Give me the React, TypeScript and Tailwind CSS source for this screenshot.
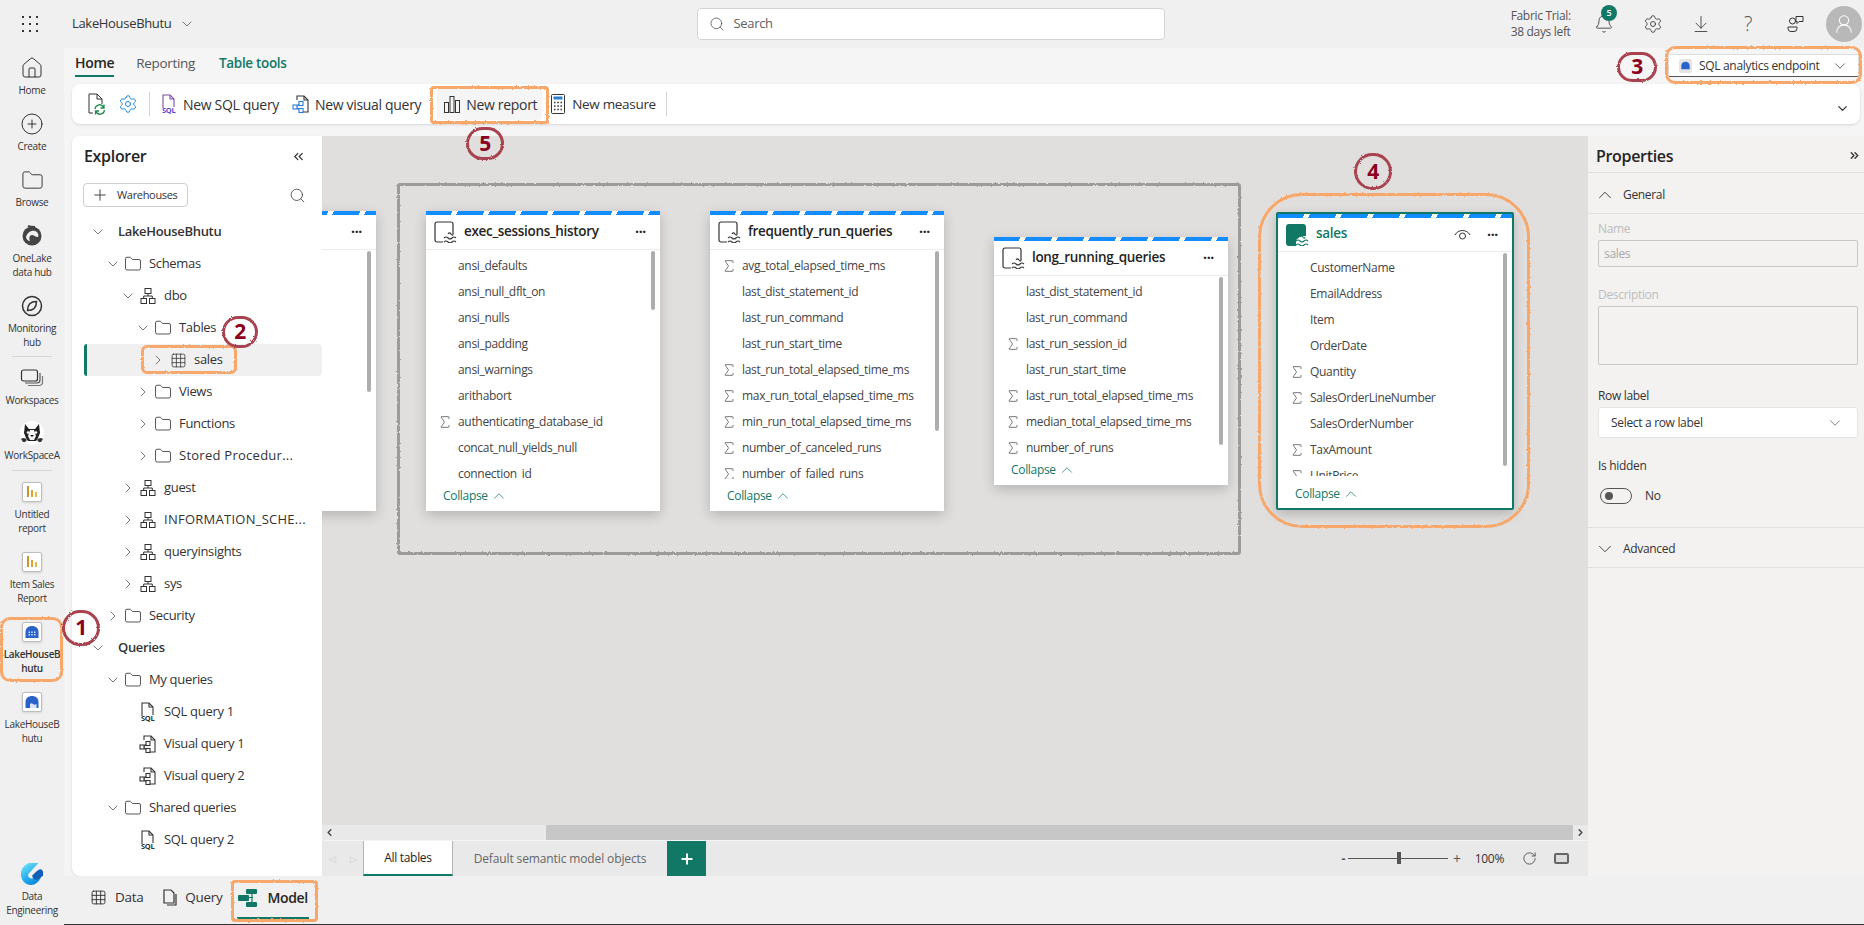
import {
  ArrowDownToLine,
  Bell,
  ChevronDown,
  ChevronRight,
  ChevronUp,
  ChevronsLeft,
  ChevronsRight,
  CirclePlus,
  Folder,
  Grid3x3,
  Home,
  Plus,
  RotateCw,
  Search,
  Settings,
  Sigma,
  UserRound,
} from "lucide-react";
import type { ReactNode } from "react";

function Waffle() {
  const dots = [0, 1, 2, 3, 4, 5, 6, 7, 8];
  return (
    <div className="grid w-4 grid-cols-3 gap-[5px]">
      {dots.map((d) => (
        <span key={d} className="h-[2px] w-[2px] bg-[#333]" />
      ))}
    </div>
  );
}

function ReportTile() {
  return (
    <span className="flex h-5 w-5 items-end justify-center gap-[2px] rounded-[2px] border border-[#bdbdbd] bg-white pb-[4px] shadow-sm">
      <span className="h-[11px] w-[2px] bg-[#c9962b]" />
      <span className="h-[7px] w-[2px] bg-[#e0a030]" />
      <span className="h-[5px] w-[2px] bg-[#e8b84a]" />
    </span>
  );
}

function LakeTile({ alt }: { alt?: boolean }) {
  return (
    <span className="flex h-5 w-5 items-center justify-center rounded-[2px] border border-[#bdbdbd] bg-white shadow-sm">
      <svg width="14" height="14" viewBox="0 0 14 14">
        <path d="M0.5 7C0.5 3 3.500 1 7 1s6.500 2 6.500 6v6H0.500z" fill="#2a62c9" />
        {alt ? (
          <path d="M5 9c1-1 2-1 3 0s2 1 3.500 0V13H5z" fill="#d7e6fb" />
        ) : (
          <path d="M3.500 6.500H5V8H3.500zm2.700 0h1.500V8H6.200zm2.800 0h1.500V8H9zM3.500 9H5v1.500H3.500zm2.700 0h1.500v1.500H6.200zm2.800 0h1.500v1.500H9z" fill="#cfe0fa" />
        )}
      </svg>
    </span>
  );
}

function OneLakeIcon() {
  return (
    <svg width="24" height="24" viewBox="0 0 24 24" fill="none">
      <circle cx="12" cy="12" r="9.500" fill="#444" />
      <path d="M6 13c1-4 5-7 9-6 3 1 4 4 3 6-3 0-4-2-6-2-3 0-3 4-2 6-2 0-4-2-4-4z" fill="#f0f0f0" />
      <path d="M8 2c2 1 5 1 7 1" stroke="#444" strokeWidth="2" />
    </svg>
  );
}

function MonitorIcon() {
  return (
    <svg width="24" height="24" viewBox="0 0 24 24" fill="none" stroke="#333" strokeWidth="1.500">
      <circle cx="12" cy="12" r="9.500" />
      <path d="M7.500 16.500c0-6 3.500-9 9-9 0 6-3.500 9-9 9z" />
    </svg>
  );
}

function WorkspacesIcon() {
  return (
    <svg width="24" height="24" viewBox="0 0 24 24" fill="none" stroke="#333" strokeWidth="1.200">
      <rect x="1.500" y="4" width="16" height="11" rx="2" />
      <path d="M20 7v7a3 3 0 0 1-3 3H5" stroke="#555" />
      <path d="M22.500 10v6a3.500 3.500 0 0 1-3.500 3.500H8" stroke="#777" />
    </svg>
  );
}

function DogAvatar() {
  return (
    <svg width="24" height="24" viewBox="0 0 24 24">
      <circle cx="12" cy="12" r="12" fill="#fff" />
      <path d="M5 3l4 5h6l4-5 1 9-2 5-2 3H8l-2-3-2-5z" fill="#222" />
      <path d="M10 9h4l2 6-2 4h-4l-2-4z" fill="#f6f6f6" />
      <circle cx="8" cy="11.500" r="1.300" fill="#fff" />
      <circle cx="16" cy="11.500" r="1.300" fill="#fff" />
      <path d="M10 14h4l-2 2z" fill="#111" />
      <path d="M1 18c2-2 5-1 6 1l-2 2H3zM23 18c-2-2-5-1-6 1l2 2h2z" fill="#333" />
    </svg>
  );
}

function EngineeringLogo() {
  return (
    <svg width="26" height="26" viewBox="0 0 26 26">
      <defs>
        <linearGradient id="eng" x1="0.200" y1="0" x2="0.800" y2="1">
          <stop offset="0" stopColor="#6fe0fa" />
          <stop offset="0.600" stopColor="#1ea7e8" />
          <stop offset="1" stopColor="#0c7fd6" />
        </linearGradient>
      </defs>
      <path d="M10 1h10L9 13c-1 4 3 6 6 4l8-4c1 5-5 12-11 12C5 25 1 19 1 13 1 7 5 3 10 1z" fill="url(#eng)" />
      <path d="M13 15c2-2 5-6 8-7 2-1 4 1 4 3v4l-6 4c-3 1-5-1-6-4z" fill="#0f5fb8" />
    </svg>
  );
}

function SqlDoc({ tiny }: { tiny?: boolean }) {
  const c = tiny ? "#333" : "#7a4fa0";
  return (
    <svg width="20" height="22" viewBox="0 0 20 22" fill="none">
      <path d="M4 15V2h7l4 4v8" stroke={c} strokeWidth="1.100" />
      <path d="M11 2v4h4" stroke={c} strokeWidth="1.100" />
      <text x="3" y="20" fontSize="7.500" fontWeight="700" fill={tiny ? "#333" : "#5b4bd0"} fontFamily="Open Sans, sans-serif">
        SQL
      </text>
    </svg>
  );
}

function VisualDoc({ color }: { color: string }) {
  return (
    <svg width="20" height="20" viewBox="0 0 20 20" fill="none" stroke={color} strokeWidth="1.100">
      <path d="M6 6V2h7l4 4v12h-5" stroke="#333" />
      <path d="M13 2v4h4" stroke="#333" />
      <path d="M5 13l4-3.500M5 13l4 3.500" />
      <rect x="2" y="11" width="4" height="4" fill="#fff" />
      <rect x="8" y="7.500" width="4" height="4" fill="#fff" />
      <rect x="8" y="14.500" width="4" height="4" fill="#fff" />
    </svg>
  );
}

function RefreshDoc() {
  return (
    <svg width="20" height="24" viewBox="0 0 20 24" fill="none">
      <path d="M6 21H2V2h8l5 5v5" stroke="#333" />
      <path d="M10 2v5h5" stroke="#333" />
      <path d="M8 17a4.500 4.500 0 0 1 8-2.500l1 1.500M17.500 18a4.500 4.500 0 0 1-8 2.500l-1-1.500M17 12.500V16h-3.500M8.500 22.500V19H12" stroke="#1f8a4c" strokeWidth="1.300" />
    </svg>
  );
}

function ReportBars() {
  return (
    <svg width="20" height="20" viewBox="0 0 20 20" fill="none" stroke="#333" strokeWidth="1">
      <rect x="2.500" y="8.500" width="4" height="10" />
      <rect x="8" y="2.500" width="4" height="16" />
      <rect x="13.500" y="6.500" width="4" height="12" />
    </svg>
  );
}

function Calculator() {
  return (
    <svg width="20" height="22" viewBox="0 0 20 22" fill="none">
      <rect x="3.500" y="1.500" width="13" height="19" rx="1" stroke="#333" />
      <rect x="5.500" y="3.500" width="9" height="3" fill="#2b7cd3" />
      <path d="M6 9.500h1.500M9.300 9.500h1.500M12.500 9.500H14M6 13h1.500M9.300 13h1.500M12.500 13H14M6 16.500h1.500M9.300 16.500h1.500M12.500 16.500H14" stroke="#333" strokeWidth="1.500" />
    </svg>
  );
}

function SchemaIcon() {
  return (
    <svg width="18" height="18" viewBox="0 0 18 18" fill="none" stroke="#333" strokeWidth="1">
      <rect x="6" y="1.500" width="6" height="5" />
      <rect x="2" y="11.500" width="5.500" height="5" />
      <rect x="10.500" y="11.500" width="5.500" height="5" />
      <path d="M9 6.500V9M4.700 11.500V9h8.600v2.500" />
    </svg>
  );
}

function TableWave({ active }: { active?: boolean }) {
  return (
    <svg width="24" height="22" viewBox="0 0 24 22" fill="none">
      {active ? (
        <path d="M3 0h14a3 3 0 0 1 3 3v9h-5l-5 4v6H3a3 3 0 0 1-3-3V3a3 3 0 0 1 3-3z" fill="#117865" />
      ) : (
        <path d="M9 21H3a2 2 0 0 1-2-2V3a2 2 0 0 1 2-2h14a2 2 0 0 1 2 2v10" stroke="#333" strokeWidth="1.200" />
      )}
      <path d="M10 17c1.500-1.500 2.500-1.500 4 0s2.500 1.500 4 0 2.500-1.500 4 0M10 21c1.500-1.500 2.500-1.500 4 0s2.500 1.500 4 0 2.500-1.500 4 0M14 13c1-1.500 2-1.500 3 0s2 1.500 2 0" stroke={active ? "#117865" : "#333"} strokeWidth="1.100" />
    </svg>
  );
}

function ModelIcon() {
  return (
    <svg width="20" height="20" viewBox="0 0 20 20">
      <rect x="8" y="1" width="11" height="5" rx="1" fill="#117865" />
      <rect x="0" y="7" width="11" height="6" rx="1" fill="#117865" />
      <rect x="8" y="14" width="11" height="5" rx="1" fill="#117865" />
      <path d="M11 9.500h4M14 6v8" stroke="#117865" strokeWidth="1.200" />
    </svg>
  );
}

function RailItem({ icon, lines, tall, bold }: { icon: ReactNode; lines: string[]; tall?: string; bold?: boolean }) {
  return (
    <div className={`flex w-16 flex-col items-center ${tall ?? "h-[56px]"}`}>
      <span className="flex h-6 w-6 items-center justify-center">{icon}</span>
      <div className={`mt-[3px] text-center text-[10px] leading-[14px] text-[#333] ${bold ? "font-semibold" : ""}`}>
        {lines.map((l) => (
          <div key={l}>{l}</div>
        ))}
      </div>
    </div>
  );
}

function LeftRail() {
  return (
    <div className="flex h-full w-16 shrink-0 flex-col bg-[#f0f0f0] pt-2">
      <RailItem icon={<Home size={24} strokeWidth={1} color="#333" />} lines={["Home"]} />
      <RailItem icon={<CirclePlus size={24} strokeWidth={1} color="#333" />} lines={["Create"]} />
      <RailItem icon={<Folder size={23} strokeWidth={1} color="#333" />} lines={["Browse"]} />
      <RailItem icon={<OneLakeIcon />} lines={["OneLake", "data hub"]} tall="h-[70px]" />
      <RailItem icon={<MonitorIcon />} lines={["Monitoring", "hub"]} tall="h-[62px]" />
      <div className="mx-3 h-px bg-[#d6d6d6]" />
      <div className="mt-[9px]">
        <RailItem icon={<WorkspacesIcon />} lines={["Workspaces"]} tall="h-[55px]" />
        <RailItem icon={<DogAvatar />} lines={["WorkSpaceA"]} tall="h-[49px]" />
      </div>
      <div className="mx-3 h-px bg-[#d6d6d6]" />
      <div className="mt-[9px]">
        <RailItem icon={<ReportTile />} lines={["Untitled", "report"]} tall="h-[70px]" />
        <RailItem icon={<ReportTile />} lines={["Item Sales", "Report"]} tall="h-[70px]" />
        <RailItem icon={<LakeTile />} lines={["LakeHouseB", "hutu"]} tall="h-[70px]" bold />
        <RailItem icon={<LakeTile alt />} lines={["LakeHouseB", "hutu"]} tall="h-[70px]" />
      </div>
      <div className="mt-auto">
        <RailItem icon={<EngineeringLogo />} lines={["Data", "Engineering"]} tall="h-[63px]" />
      </div>
    </div>
  );
}

type Node = {
  level: number;
  label: string;
  chev?: "down" | "right";
  icon?: "folder" | "schema" | "table" | "sql" | "visual";
  bold?: boolean;
  selected?: boolean;
  wide?: boolean;
};

const treeNodes: Node[] = [
  { level: 0, label: "LakeHouseBhutu", chev: "down", bold: true },
  { level: 1, label: "Schemas", chev: "down", icon: "folder" },
  { level: 2, label: "dbo", chev: "down", icon: "schema" },
  { level: 3, label: "Tables", chev: "down", icon: "folder" },
  { level: 4, label: "sales", chev: "right", icon: "table", selected: true },
  { level: 3, label: "Views", chev: "right", icon: "folder" },
  { level: 3, label: "Functions", chev: "right", icon: "folder" },
  { level: 3, label: "Stored Procedur...", chev: "right", icon: "folder", wide: true },
  { level: 2, label: "guest", chev: "right", icon: "schema" },
  { level: 2, label: "INFORMATION_SCHE...", chev: "right", icon: "schema", wide: true },
  { level: 2, label: "queryinsights", chev: "right", icon: "schema" },
  { level: 2, label: "sys", chev: "right", icon: "schema" },
  { level: 1, label: "Security", chev: "right", icon: "folder" },
  { level: 0, label: "Queries", chev: "down", bold: true },
  { level: 1, label: "My queries", chev: "down", icon: "folder" },
  { level: 2, label: "SQL query 1", icon: "sql" },
  { level: 2, label: "Visual query 1", icon: "visual" },
  { level: 2, label: "Visual query 2", icon: "visual" },
  { level: 1, label: "Shared queries", chev: "down", icon: "folder" },
  { level: 2, label: "SQL query 2", icon: "sql" },
];

const indent = ["pl-[20px]", "pl-[35px]", "pl-[50px]", "pl-[65px]", "pl-[68px] ml-3"];

function TreeIcon({ kind }: { kind: Node["icon"] }) {
  if (kind === "folder") return <Folder size={18} strokeWidth={1.100} color="#333" />;
  if (kind === "schema") return <SchemaIcon />;
  if (kind === "table") return <Grid3x3 size={17} strokeWidth={1.100} color="#333" />;
  if (kind === "sql") return <SqlDoc tiny />;
  return <VisualDoc color="#333" />;
}

function TreeRow({ node }: { node: Node }) {
  const { level, label, chev, icon, bold, selected, wide } = node;
  return (
    <div className={`relative flex h-8 items-center text-[13px] text-[#333] ${indent[level]} ${selected ? "rounded bg-[#f0f0f0]" : ""} ${bold ? "font-semibold" : ""}`}>
      {selected && <span className="absolute left-0 top-0 h-full w-[3px] rounded-l bg-[#117865]" />}
      <span className="flex w-3 shrink-0 items-center justify-center">
        {chev === "down" && <ChevronDown size={16} strokeWidth={1} color="#333" className="shrink-0" />}
        {chev === "right" && <ChevronRight size={16} strokeWidth={1} color="#333" className="shrink-0" />}
      </span>
      {icon ? (
        <>
          <span className="ml-1 flex w-5 shrink-0 items-center justify-center">
            <TreeIcon kind={icon} />
          </span>
          <span className={`ml-[6px] whitespace-nowrap ${wide ? "tracking-[0.02em]" : ""}`}>{label}</span>
        </>
      ) : (
        <span className="ml-[14px] whitespace-nowrap">{label}</span>
      )}
    </div>
  );
}

function Explorer() {
  return (
    <div className="ml-2 flex h-full w-[250px] shrink-0 flex-col rounded-l-lg bg-white shadow">
      <div className="flex h-10 shrink-0 items-center justify-between pl-3 pr-4">
        <span className="text-[16px] font-semibold text-[#252423]">Explorer</span>
        <ChevronsLeft size={15} strokeWidth={2} color="#333" />
      </div>
      <div className="mt-[7px] flex h-6 items-center justify-between pl-[11px] pr-[16px]">
        <button className="flex h-6 w-[105px] items-center gap-2 rounded border border-[#cfcfcf] pl-[7px] text-[11px] text-[#333]">
          <Plus size={18} strokeWidth={1.200} color="#333" />
          Warehouses
        </button>
        <Search size={17} strokeWidth={1.100} color="#333" />
      </div>
      <div className="mt-[9px]">
        {treeNodes.map((n) => (
          <TreeRow key={n.label + n.level} node={n} />
        ))}
      </div>
    </div>
  );
}

type Column = { name: string; sum?: boolean };

const names = (list: string[]): Column[] =>
  list.map((s) => (s.startsWith("*") ? { name: s.slice(1), sum: true } : { name: s }));

function TableCard({
  title,
  columns,
  pos,
  thumb,
  listH,
  active,
}: {
  title: string;
  columns: Column[];
  pos: string;
  thumb: string;
  listH: string;
  active?: boolean;
}) {
  return (
    <div className={`absolute bg-white shadow-[0_4px_12px_rgba(0,0,0,0.2)] ${pos} ${active ? "rounded-[2px] border-2 border-[#117865]" : ""}`}>
      <div className="h-[4px] bg-[repeating-linear-gradient(115deg,#118dff_0,#118dff_24px,transparent_24px,transparent_29px)]" />
      <div className={`flex items-center border-b border-[#ececec] pl-[8px] pr-[14px] ${active ? "h-[34px]" : "h-[35px]"}`}>
        <TableWave active={active} />
        <span className={`mb-[2px] ml-[6px] text-[13.500px] font-semibold ${active ? "text-[#117865]" : "text-[#252423]"}`}>{title}</span>
        {active && (
          <svg className="ml-auto mr-[16px]" width="17" height="14" viewBox="0 0 17 14" fill="none" stroke="#333">
            <path d="M1 7c3-6 12-6 15 0" />
            <circle cx="8.500" cy="8" r="3" />
          </svg>
        )}
        <span className={`text-[14px] font-bold leading-none text-[#252423] ${active ? "" : "ml-auto"}`}>···</span>
      </div>
      <div className={`relative overflow-hidden pt-[3px] ${listH}`}>
        {columns.map((c) => (
          <div key={c.name} className="flex h-[26px] items-center text-[12px] text-[#444]">
            <span className="flex w-[32px] shrink-0 justify-end pr-[5px]">
              {c.sum && <Sigma size={16} strokeWidth={1} color="#333" />}
            </span>
            <span className="whitespace-nowrap">{c.name}</span>
          </div>
        ))}
        <span className={`absolute right-[5px] top-px w-1 rounded bg-[#adadad] ${thumb}`} />
      </div>
      <div className={`flex h-[31px] items-center gap-[2px] pl-[17px] text-[12px] text-[#117865] ${active ? "pt-[3px]" : ""}`}>
        Collapse
        <ChevronUp size={18} strokeWidth={1} color="#117865" />
      </div>
    </div>
  );
}

const execCols = names([
  "ansi_defaults",
  "ansi_null_dflt_on",
  "ansi_nulls",
  "ansi_padding",
  "ansi_warnings",
  "arithabort",
  "*authenticating_database_id",
  "concat_null_yields_null",
  "connection_id",
]);
const freqCols = names([
  "*avg_total_elapsed_time_ms",
  "last_dist_statement_id",
  "last_run_command",
  "last_run_start_time",
  "*last_run_total_elapsed_time_ms",
  "*max_run_total_elapsed_time_ms",
  "*min_run_total_elapsed_time_ms",
  "*number_of_canceled_runs",
  "*number_of_failed_runs",
]);
const longCols = names([
  "last_dist_statement_id",
  "last_run_command",
  "*last_run_session_id",
  "last_run_start_time",
  "*last_run_total_elapsed_time_ms",
  "*median_total_elapsed_time_ms",
  "*number_of_runs",
]);
const salesCols = names([
  "CustomerName",
  "EmailAddress",
  "Item",
  "OrderDate",
  "*Quantity",
  "*SalesOrderLineNumber",
  "SalesOrderNumber",
  "*TaxAmount",
  "*UnitPrice",
]);

function Canvas() {
  return (
    <div className="relative flex-1 overflow-hidden bg-[#e1dfdd]">
      <div className="absolute left-[75px] top-[47px] h-[372px] w-[844px] rounded-[3px] border-[3px] border-[#9b9b9b] [filter:url(#rough)]" />
      <TableCard title="" columns={[]} pos="-left-[180px] top-[75px] w-[234px]" thumb="h-[141px]" listH="h-[230px]" />
      <TableCard title="exec_sessions_history" columns={execCols} pos="left-[104px] top-[75px] w-[234px]" thumb="h-[59px]" listH="h-[229px] mb-[1px]" />
      <TableCard title="frequently_run_queries" columns={freqCols} pos="left-[388px] top-[75px] w-[234px]" thumb="h-[180px]" listH="h-[229px] mb-[1px]" />
      <TableCard title="long_running_queries" columns={longCols} pos="left-[672px] top-[101px] w-[234px]" thumb="h-[168px]" listH="h-[178px]" />
      <TableCard title="sales" columns={salesCols} pos="left-[954px] top-[76px] w-[238px]" thumb="h-[213px]" listH="h-[224px] mb-[1px]" active />
    </div>
  );
}

function CanvasFooter() {
  return (
    <>
      <div className="flex h-[15px] shrink-0 items-center bg-[#e9e9e9]">
        <span className="flex w-[15px] justify-center">
          <ChevronRight size={11} strokeWidth={3} color="#444" className="rotate-180" />
        </span>
        <span className="ml-[209px] h-full w-[1027px] bg-[#c7c7c7]" />
        <span className="ml-auto flex w-[15px] justify-center">
          <ChevronRight size={11} strokeWidth={3} color="#444" />
        </span>
      </div>
      <div className="mt-px flex h-[35px] shrink-0 items-stretch bg-[#e9e9e9] text-[12px]">
        <span className="flex w-[41px] items-center justify-center gap-[14px] text-[9px] text-[#cfcfcf]">
          <span>◁</span>
          <span>▷</span>
        </span>
        <span className="flex w-[90px] items-center justify-center border-x border-[#b5b5b5] border-b-2 border-b-[#117865] bg-white font-medium text-[#252423]">
          All tables
        </span>
        <span className="flex w-[214px] items-center justify-center font-medium tracking-[-0.01em] text-[#666]">Default semantic model objects</span>
        <span className="flex w-[39px] items-center justify-center bg-[#117865]">
          <Plus size={16} strokeWidth={3} color="#fff" />
        </span>
        <div className="ml-auto flex items-center pr-[19px] text-[#333]">
          <span className="mr-[3px] font-bold text-[#555]">-</span>
          <span className="relative h-px w-[100px] bg-[#555]">
            <span className="absolute -top-[6px] left-[49px] h-[12px] w-1 bg-[#555]" />
          </span>
          <span className="ml-[5px] text-[14px] text-[#555]">+</span>
          <span className="ml-[14px] font-medium">100%</span>
          <RotateCw size={15} strokeWidth={1.500} color="#555" className="ml-[18px]" />
          <span className="ml-[17px] flex h-[11px] w-[15px] items-center justify-center rounded-[2px] border-2 border-[#666] bg-[#ddd]" />
        </div>
      </div>
    </>
  );
}

function Properties() {
  return (
    <div className="flex h-full w-[276px] shrink-0 flex-col bg-[#f3f2f1] text-[12px] text-[#333]">
      <div className="flex h-[37px] shrink-0 items-center justify-between border-b border-[#e0e0e0] pl-2 pr-[3px] pt-[3px]">
        <span className="text-[16px] font-semibold text-[#252423]">Properties</span>
        <ChevronsRight size={13} strokeWidth={2.500} color="#333" />
      </div>
      <div className="flex h-[41px] shrink-0 items-center gap-[7px] border-b border-[#e0e0e0] pl-[6px] pt-[4px]">
        <ChevronUp size={22} strokeWidth={1} color="#333" />
        General
      </div>
      <div className="px-[10px] pr-[6px]">
        <div className="mt-[6px] text-[#bdbdbd]">Name</div>
        <div className="mt-[2px] flex h-[27px] items-center rounded-[2px] border border-[#c8c8c8] pl-[5px] text-[#a8a8a8]">sales</div>
        <div className="mt-[19px] text-[#bdbdbd]">Description</div>
        <div className="mt-[2px] h-[59px] rounded-[2px] border border-[#c8c8c8]" />
        <div className="mt-[22px]">Row label</div>
        <div className="mt-[2px] flex h-[31px] items-center justify-between rounded-[3px] border border-[#e4e4e4] bg-white pl-[12px] pr-[13px]">
          Select a row label
          <ChevronDown size={18} strokeWidth={1} color="#555" />
        </div>
        <div className="mt-[19px]">Is hidden</div>
        <div className="mt-[12px] flex items-center pl-[2px]">
          <span className="flex h-[16px] w-[32px] items-center rounded-full border border-[#555] pl-[4px]">
            <span className="h-2 w-2 rounded-full bg-[#555]" />
          </span>
          <span className="ml-[13px]">No</span>
        </div>
      </div>
      <div className="mt-[22px] flex h-[41px] shrink-0 items-center gap-[7px] border-y border-[#e0e0e0] pl-[6px] pt-[2px]">
        <ChevronDown size={22} strokeWidth={1} color="#333" />
        Advanced
      </div>
    </div>
  );
}

function TopBar() {
  return (
    <div className="flex h-12 shrink-0 items-center bg-[#f0f0f0]">
      <span className="flex w-[60px] justify-center">
        <Waffle />
      </span>
      <span className="ml-3 text-[13px] text-[#333]">LakeHouseBhutu</span>
      <ChevronDown size={16} strokeWidth={1} color="#333" className="ml-2" />
      <div className="ml-[502px] flex h-8 w-[468px] items-center gap-2 rounded border border-[#d4d4d4] bg-white pl-[11px] text-[13px] text-[#616161]">
        <Search size={16} strokeWidth={1.100} color="#444" />
        Search
      </div>
      <div className="ml-auto flex items-center pr-[2px]">
        <div className="text-[12px] leading-[16px] text-[#555]">
          Fabric Trial:
          <br />
          38 days left
        </div>
        <span className="relative ml-[21px] flex w-6 justify-center">
          <Bell size={20} strokeWidth={1} color="#333" />
          <span className="absolute -right-[1px] -top-[9px] flex h-4 w-4 items-center justify-center rounded-full bg-[#117865] text-[9px] font-semibold text-white">5</span>
        </span>
        <Settings size={20} strokeWidth={1} color="#333" className="ml-[27px]" />
        <ArrowDownToLine size={20} strokeWidth={1} color="#333" className="ml-[28px]" />
        <span className="ml-[33px] text-[20px] font-light leading-none text-[#555]">?</span>
        <svg className="ml-[35px]" width="18" height="18" viewBox="0 0 18 18" fill="none" stroke="#333">
          <circle cx="5.500" cy="6" r="3" />
          <path d="M1 12h9v1.500a3 3 0 0 1-3 3H4a3 3 0 0 1-3-3z" />
          <path d="M9 1.500h7v5h-4l-2 2v-2H9z" />
        </svg>
        <span className="ml-[21px] flex h-9 w-9 items-center justify-center rounded-full bg-[#b8b8b8]">
          <UserRound size={22} strokeWidth={1.200} color="#fff" />
        </span>
      </div>
    </div>
  );
}

function LakeMini() {
  return (
    <span className="flex h-[14px] w-[13px] items-center justify-center rounded-[2px] bg-[#e4e4e4]">
      <svg width="9" height="9" viewBox="0 0 14 14">
        <path d="M0.500 7C0.500 3 3.500 1 7 1s6.500 2 6.500 6v6H0.500z" fill="#2a62c9" />
      </svg>
    </span>
  );
}

function Ribbon() {
  return (
    <div className="shrink-0 bg-[#f5f5f5]">
      <div className="flex h-[36px] items-start pl-[11px] pr-[5px] text-[13.500px]">
        <span className="flex h-[29px] items-end border-b-2 border-[#117865] pb-[2px] text-[14px] font-semibold text-[#252423]">Home</span>
        <span className="ml-[22px] flex h-[29px] items-end pb-[4px] text-[#555]">Reporting</span>
        <span className="ml-6 flex h-[29px] items-end pb-[4px] font-semibold text-[#117865]">Table tools</span>
        <div className="ml-auto mt-[6px] flex h-[23px] w-[191px] items-center rounded-[2px] border border-[#ddd] border-b-[#555] bg-white pl-[10px] pr-[9px] text-[12px] text-[#333]">
          <LakeMini />
          <span className="ml-[7px]">SQL analytics endpoint</span>
          <ChevronDown size={18} strokeWidth={1} color="#333" className="ml-auto" />
        </div>
      </div>
      <div className="ml-2 mr-1 flex h-10 items-center rounded-lg bg-white pl-[15px] pr-[10px] text-[14px] text-[#333] shadow">
        <RefreshDoc />
        <Settings size={20} strokeWidth={1.200} color="#1f86d8" className="ml-[11px]" />
        <span className="ml-[11px] h-6 w-px bg-[#d6d6d6]" />
        <span className="ml-[9px]">
          <SqlDoc />
        </span>
        <span className="ml-1">New SQL query</span>
        <span className="ml-3">
          <VisualDoc color="#2b7cd3" />
        </span>
        <span className="ml-1">New visual query</span>
        <span className="ml-4 flex h-8 items-center rounded bg-[#f5f5f5] pl-[5px] pr-[5px]">
          <ReportBars />
          <span className="ml-1">New report</span>
        </span>
        <span className="ml-[6px]">
          <Calculator />
        </span>
        <span className="ml-1 text-[13.500px]">New measure</span>
        <span className="ml-[10px] h-6 w-px bg-[#d6d6d6]" />
        <ChevronDown size={15} strokeWidth={2} color="#333" className="ml-auto mt-2" />
      </div>
      <div className="h-3" />
    </div>
  );
}

function BottomTabs() {
  return (
    <div className="flex h-[49px] shrink-0 items-center border-b border-[#333] bg-[#f0f0f0] pb-[5px] pl-[26px] text-[13.500px] text-[#333]">
      <Grid3x3 size={17} strokeWidth={1.300} color="#333" />
      <span className="ml-2">Data</span>
      <svg className="ml-[19px]" width="16" height="18" viewBox="0 0 16 18" fill="none" stroke="#333" strokeWidth="1.200">
        <path d="M2 14V1h7l3 3v10z" />
        <path d="M14 5v11H5" />
      </svg>
      <span className="ml-[7px]">Query</span>
      <span className="relative ml-[16px] flex items-center pr-[1px]">
        <ModelIcon />
        <span className="ml-[9px] text-[14px] font-semibold text-[#252423]">Model</span>
        <span className="absolute -bottom-[11px] -left-[1px] right-0 h-[2px] bg-[#117865]" />
      </span>
    </div>
  );
}

function Orange({ pos }: { pos: string }) {
  return <div className={`pointer-events-none absolute border-[3px] border-[#f7a76b] [filter:url(#rough)] ${pos}`} />;
}

function Badge({ pos, n }: { pos: string; n: string }) {
  return (
    <div className={`absolute flex items-center justify-center text-[21px] font-bold text-[#8b0020] ${pos}`}>
      <span className="absolute inset-0 rounded-full border-[3px] border-[#a8434f] [filter:url(#rough)]" />
      {n}
    </div>
  );
}

export default function App() {
  return (
    <div className="relative flex h-[925px] w-[1864px] flex-col overflow-hidden bg-[#f0f0f0] font-['Open_Sans',sans-serif] tracking-[-0.02em]">
      <svg className="absolute h-0 w-0">
        <filter id="rough">
          <feTurbulence type="fractalNoise" baseFrequency="0.5" numOctaves="2" seed="3" />
          <feDisplacementMap in="SourceGraphic" scale="2.500" />
        </filter>
      </svg>
      <TopBar />
      <div className="flex min-h-0 flex-1">
        <LeftRail />
        <div className="flex min-w-0 flex-1 flex-col bg-[#f5f5f5]">
          <Ribbon />
          <div className="flex h-[740px] shrink-0">
            <Explorer />
            <div className="flex min-w-0 flex-1 flex-col">
              <Canvas />
              <CanvasFooter />
            </div>
            <Properties />
          </div>
          <BottomTabs />
        </div>
      </div>

      <Orange pos="left-0 top-[617px] h-[65px] w-[63px] rounded-[10px]" />
      <Orange pos="left-[141px] top-[345px] h-[29px] w-[96px] rounded-[6px]" />
      <Orange pos="left-[1665px] top-[46px] h-[38px] w-[197px] rounded-[10px]" />
      <Orange pos="left-[1258px] top-[193px] h-[335px] w-[272px] rounded-[44px]" />
      <Orange pos="left-[430px] top-[86px] h-[38px] w-[119px] rounded-[4px]" />
      <Orange pos="left-[231px] top-[880px] h-[42px] w-[87px] rounded-[4px]" />

      <Badge n="1" pos="left-[62px] top-[610px] h-[36px] w-[38px]" />
      <Badge n="2" pos="left-[222px] top-[316px] h-[32px] w-[36px]" />
      <Badge n="3" pos="left-[1617px] top-[52px] h-[30px] w-[40px]" />
      <Badge n="4" pos="left-[1354px] top-[153px] h-[37px] w-[38px]" />
      <Badge n="5" pos="left-[466px] top-[127px] h-[33px] w-[38px]" />
    </div>
  );
}
